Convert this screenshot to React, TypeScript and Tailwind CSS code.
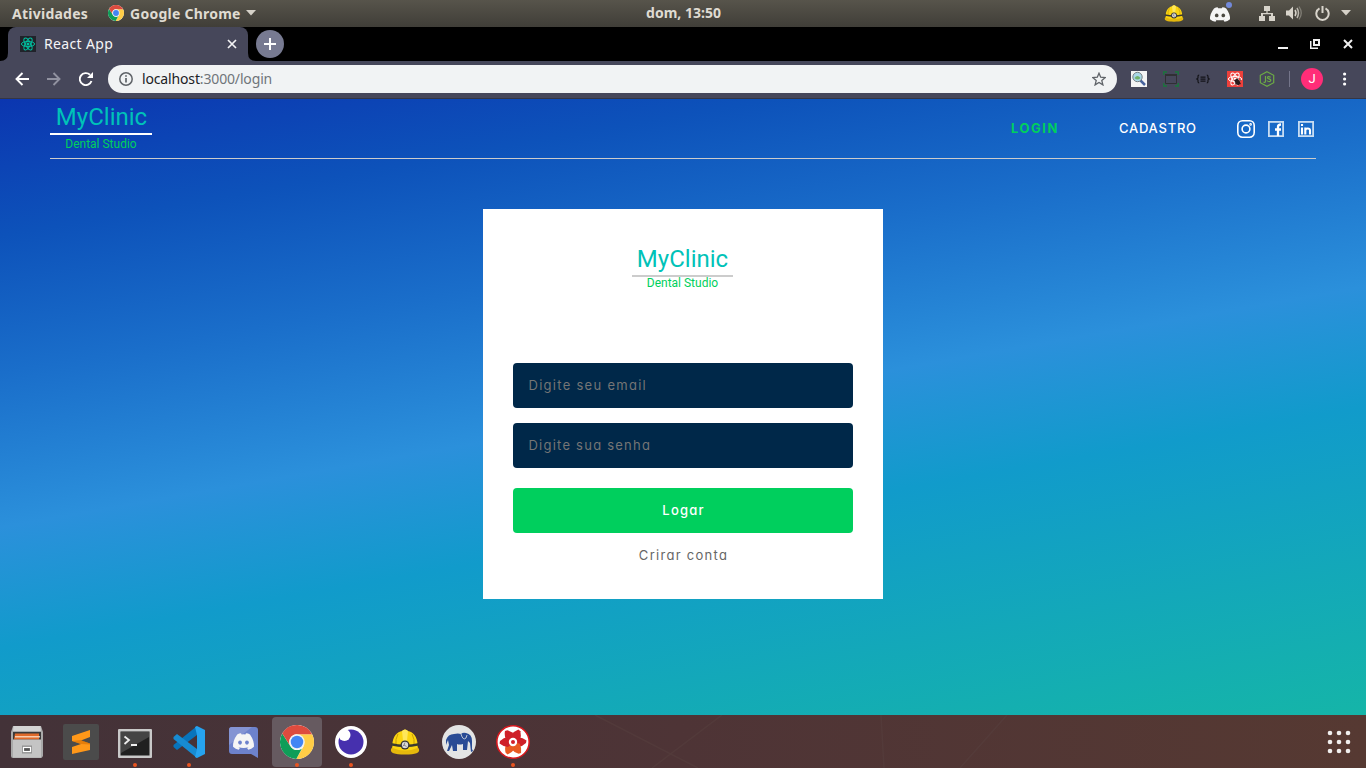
import type { ReactNode } from "react";

const ubuntu = "font-['Noto_Sans',sans-serif]";
const lexend = "font-[Inter,sans-serif] [font-feature-settings:'cv11']";

function ChromeIcon({ size }: { size: number }) {
  return (
    <svg width={size} height={size} viewBox="0 0 48 48">
      <circle cx="24" cy="24" r="24" fill="#fff" />
      <path d="M24 13 H45.3 A24 24 0 0 1 23 48 L33.5 29.5 Z" fill="#ffcd46" />
      <path d="M3.2 12 L14.5 29.5 C18 36 26 37 31 33 L23 48 A24 24 0 0 1 3.2 12 Z" fill="#0f9d58" />
      <path d="M24 13 H45.3 A24 24 0 0 0 3.2 12 L14.5 29.5 A11 11 0 0 1 24 13Z" fill="#dd4b3e" />
      <circle cx="24" cy="24" r="11" fill="#f1f1f1" />
      <circle cx="24" cy="24" r="8.8" fill="#4285f4" />
    </svg>
  );
}

function Helmet({ width, height }: { width: number; height: number }) {
  return (
    <svg width={width} height={height} viewBox="0 0 30 26">
      <path d="M1 20 C0 24 4 25.5 15 25.5 S30 24 29 20 L26 16 H4 Z" fill="#e5b80c" />
      <path d="M2.500 19 C1.500 8 7 3 12 2 Q15 -1 18 2 C23 3 28.500 8 27.500 19 Q15 24 2.500 19Z" fill="#fbd511" />
      <path d="M12 2 Q15 -1 18 2 L17 12 H13Z" fill="#ffe75a" />
      <path d="M8 5 Q5 10 6 17 M22 5 Q25 10 24 17" stroke="#c99e07" fill="none" />
      <path d="M1 14 Q15 17.500 29 14 V16.500 Q15 20 1 16.500Z" fill="#3b3a30" />
      <circle cx="15" cy="16" r="4.5" fill="#333" />
      <circle cx="15" cy="16" r="3.200" fill="#d8d8d8" />
      <path d="M15 13.500l-1 2.500 2.500 1.500M14 16l-1.500 1.500" stroke="#666" strokeWidth=".7" fill="none" />
    </svg>
  );
}

function DiscordFace({ width, height, eye }: { width: number; height: number; eye: string }) {
  return (
    <svg width={width} height={height} viewBox="0 0 22 16" preserveAspectRatio="none">
      <path
        d="M5 1.5 Q7 .4 8.6 .3 L9.2 1.4 Q11 1.1 12.8 1.4 L13.4 .3 Q15.4 .4 17.2 1.5 Q21.4 7.5 21 13 Q18.6 15.2 15.6 15.7 L14.4 14 L16 13.2 Q11 15.2 6 13.2 L7.6 14 L6.4 15.7 Q3.4 15.2 1 13 Q.6 7.5 5 1.5Z"
        fill="#f5f5f5"
      />
      <ellipse cx="7.7" cy="9" rx="1.8" ry="2" fill={eye} />
      <ellipse cx="14.3" cy="9" rx="1.8" ry="2" fill={eye} />
    </svg>
  );
}

function ReactAtom({ size, color, bg }: { size: number; color: string; bg: string }) {
  return (
    <svg width={size} height={size} viewBox="0 0 16 16">
      <rect width="16" height="16" fill={bg} />
      <g fill="none" stroke={color} strokeWidth="1">
        <ellipse cx="8" cy="8" rx="6.6" ry="2.6" />
        <ellipse cx="8" cy="8" rx="6.6" ry="2.6" transform="rotate(60 8 8)" />
        <ellipse cx="8" cy="8" rx="6.6" ry="2.6" transform="rotate(120 8 8)" />
      </g>
      <circle cx="8" cy="8" r="1.5" fill={color} />
    </svg>
  );
}

function TopBar() {
  return (
    <div className={`flex h-[27px] shrink-0 items-center bg-linear-to-b from-[#57544b] to-[#403e38] pb-px text-[14px] font-bold text-[#dfdbd2] ${ubuntu}`}>
      <div className="flex flex-1 items-center">
        <span className="ml-3 w-[96px] whitespace-nowrap tracking-[0.250px]">Atividades</span>
        <ChromeIcon size={16} />
        <span className="ml-[6px] w-[112px] whitespace-nowrap tracking-[0.250px]">Google Chrome</span>
        <svg className="ml-1" width="10" height="6" viewBox="0 0 10 6"><path d="M0 0h10L5 5.5z" fill="#d5d1c8" /></svg>
      </div>
      <span className="mb-px ml-px whitespace-nowrap text-[14px]">dom, 13:50</span>
      <div className="flex flex-1 items-center justify-end">
        <Helmet width={20} height={17} />
        <span className="relative ml-[25px] mr-[28px] mt-[2px] flex">
          <DiscordFace width={22} height={15} eye="#4b4941" />
          <span className="absolute -right-px -top-[5px] size-[6px] rounded-full bg-[#7289da]" />
        </span>
        <svg width="16" height="16" viewBox="0 0 16 16" fill="#d8d4cb">
          <path d="M5 1h6v5H8.600v2H14v3h2v5h-6v-5h2V9.300H4V11h2v5H0v-5h2V8h5.400V6H5z" />
        </svg>
        <svg className="ml-[11px]" width="16" height="14" viewBox="0 0 16 14" fill="none">
          <path d="M0 4.500h3l4-4v13l-4-4H0z" fill="#d8d4cb" />
          <path d="M9 4q2 3 0 6" stroke="#d8d4cb" strokeWidth="1.500" />
          <path d="M11 2q3 5 0 10" stroke="#bbb7ae" strokeWidth="1.500" />
          <path d="M13 .5q4.500 6.500 0 13" stroke="#827f76" strokeWidth="1.300" />
        </svg>
        <svg className="ml-[13px]" width="15" height="15" viewBox="0 0 15 15" fill="none" stroke="#d8d4cb" strokeWidth="2">
          <path d="M4.500 2.300a6.200 6.200 0 1 0 6 0M7.500 0v7" />
        </svg>
        <svg className="ml-[11px] mr-[15px]" width="10" height="6" viewBox="0 0 10 6"><path d="M0 0h10L5 5.500z" fill="#d5d1c8" /></svg>
      </div>
    </div>
  );
}

function TabStrip() {
  return (
    <div className="flex h-[34px] shrink-0 items-end bg-black">
      <svg width="8" height="8" viewBox="0 0 8 8"><path d="M8 0v8H0q8 0 8-8" fill="#46475a" /></svg>
      <div className="flex h-[34px] w-[240px] items-center rounded-t-[8px] bg-[#46475a] pl-3 pr-[11px]">
        <ReactAtom size={16} color="#00c0a0" bg="#20232a" />
        <span className={`ml-2 mb-px flex-1 whitespace-nowrap text-[14px] tracking-[0.350px] text-[#f5f5f7] ${ubuntu}`}>React App</span>
        <svg width="10" height="10" viewBox="0 0 10 10" stroke="#f2f2f4" strokeWidth="1.700"><path d="M1 1l8 8M9 1l-8 8" /></svg>
      </div>
      <svg width="8" height="8" viewBox="0 0 8 8"><path d="M0 0v8h8q-8 0-8-8" fill="#46475a" /></svg>
      <div className="mb-[3px] flex size-7 items-center justify-center rounded-full bg-[#777a91]">
        <svg width="12" height="12" viewBox="0 0 12 12" stroke="#fff" strokeWidth="2"><path d="M6 0v12M0 6h12" /></svg>
      </div>
      <div className="flex h-full flex-1 items-center justify-end pr-[13px]">
        <svg width="10" height="12" viewBox="0 0 10 12"><path d="M0 9h10v2H0z" fill="#f0f0f0" /></svg>
        <svg className="ml-[22px]" width="10" height="10" viewBox="0 0 10 10" fill="none" stroke="#f0f0f0">
          <path d="M4 1h5v5H4z" strokeWidth="2" />
          <path d="M.75 2v7.250H8" strokeWidth="1.500" />
        </svg>
        <svg className="ml-[23px]" width="10" height="10" viewBox="0 0 10 10" stroke="#f0f0f0" strokeWidth="2"><path d="M1 1l8 8M9 1l-8 8" /></svg>
      </div>
    </div>
  );
}

function Toolbar() {
  return (
    <div className="flex h-[38px] shrink-0 items-center border-b border-[#353644] bg-[#46475a] pb-px">
      <svg className="ml-[15px]" width="14" height="14" viewBox="0 0 14 14" fill="none" stroke="#fff" strokeWidth="1.900"><path d="M14 7H1.500M7.500 1L1.500 7l6 6" /></svg>
      <svg className="ml-[18px]" width="14" height="14" viewBox="0 0 14 14" fill="none" stroke="#9192a0" strokeWidth="1.900"><path d="M0 7h12.500M6.500 1l6 6-6 6" /></svg>
      <svg className="ml-[18px]" width="14" height="14" viewBox="0 0 14 14" fill="none"><path d="M12.500 9A6 6 0 1 1 11 2.800" stroke="#fff" strokeWidth="1.900" /><path d="M14 0v6H8z" fill="#fff" /></svg>
      <div className="ml-[15px] flex h-7 w-[1009px] items-center rounded-full bg-[#f1f3f4] pl-[11px] pr-[11px]">
        <svg width="14" height="14" viewBox="0 0 14 14" fill="none" stroke="#5f6368" strokeWidth="1.500"><circle cx="7" cy="7" r="6.200" /><path d="M7 6v4.500M7 3.300v1.500" strokeWidth="1.700" /></svg>
        <span className={`mb-[2px] ml-[9px] flex-1 whitespace-nowrap text-[14px] tracking-[-0.150px] text-[#202124] ${ubuntu}`}>localhost<span className="text-[#70757a]">:3000/login</span></span>
        <svg width="14" height="14" viewBox="0 0 14 14" fill="none" stroke="#5f6368" strokeWidth="1.300"><path d="M7 1.200l1.700 4 4.600.4-3.500 3 1.100 4.300L7 10.500l-3.900 2.400 1.100-4.300-3.500-3 4.600-.4z" /></svg>
      </div>
      <svg className="ml-[14px]" width="16" height="16" viewBox="0 0 16 16">
        <rect width="16" height="16" fill="#f4f4f4" />
        <path d="M9 9l5 5" stroke="#48639d" strokeWidth="2.500" />
        <circle cx="6.500" cy="6" r="4.700" fill="#a9d7e8" stroke="#777f82" />
        <path d="M3.500 7q3-4 6 0q-3 3-6 0" fill="#71b36b" />
      </svg>
      <svg className="ml-4" width="16" height="16" viewBox="0 0 16 16" fill="none">
        <path d="M.75 4V1H4M12 1h3.250v3M.75 12v3H4M12 15h3.250v-3" stroke="#19773b" strokeWidth="1.300" />
        <path d="M2.500 3.500h11v9h-11z" stroke="#303034" /><path d="M2 4h12" stroke="#303034" strokeWidth="2" />
      </svg>
      <svg className="ml-4" width="16" height="16" viewBox="0 0 16 16" fill="none" stroke="#15151a" strokeWidth="1.200">
        <path d="M4.200 4.200Q3 4.200 3 5.500V7L1.800 8 3 9v1.500q0 1.300 1.200 1.300M11.800 4.200q1.200 0 1.200 1.300V7l1.200 1-1.200 1v1.500q0 1.300-1.200 1.300M5.500 6.200h5M5.500 8.200h5M5.500 10.200h5" />
      </svg>
      <div className="relative ml-4 size-4">
        <ReactAtom size={16} color="#fff" bg="#ed403b" />
        <svg className="absolute left-[6px] top-[6px]" width="9" height="9" viewBox="0 0 9 9"><ellipse cx="4.500" cy="5" rx="2.300" ry="3.300" transform="rotate(-35 4.500 5)" fill="#2b1c1c" /><path d="M1 3l7 4M5 1L3 8M8 3L2 7" stroke="#2b1c1c" strokeWidth=".8" /></svg>
      </div>
      <svg className="ml-4" width="16" height="16" viewBox="0 0 16 16" fill="none" stroke="#6cab45" strokeWidth="1.200">
        <path d="M8 .7l6.700 3.600v7.400L8 15.300l-6.700-3.600V4.300zM6.500 5v5.300q0 1.400-2 .9M11.700 6.300Q8.500 4.800 8.500 6.700c0 1.600 3.300.7 3.300 2.600 0 1.800-3.500 1.400-3.700.2" />
      </svg>
      <div className="ml-[14px] h-4 w-px bg-[#74758a]" />
      <div className="ml-[11px] flex size-[22px] items-center justify-center rounded-full bg-[#ff2d78] text-[13px] text-white font-[Roboto,sans-serif]">J</div>
      <svg className="ml-5" width="4" height="14" viewBox="0 0 4 14" fill="#fff"><circle cx="1.600" cy="2" r="1.600" /><circle cx="1.600" cy="7" r="1.600" /><circle cx="1.600" cy="12" r="1.600" /></svg>
    </div>
  );
}

function Header() {
  return (
    <header className="mx-[50px] flex h-[60px] shrink-0 items-start border-b border-[#ccc]">
      <div className="flex w-[102px] flex-col items-center font-[Roboto,sans-serif]">
        <span className="flex h-[36px] w-full items-center justify-center border-b-2 border-white pl-px pt-[2px] text-[24px] text-[#00c2b8]">MyClinic</span>
        <span className="mt-[1px] text-[12px] leading-[17px] text-[#00cf5d]">Dental Studio</span>
      </div>
      <nav className={`ml-auto flex h-[59px] items-center text-[13px] ${lexend}`}>
        <span className="w-[108px] whitespace-nowrap font-bold tracking-[1.500px] text-[#00cf5d]">LOGIN</span>
        <span className="w-[118px] whitespace-nowrap font-medium tracking-[0.750px] text-white">CADASTRO</span>
        <svg width="18" height="18" viewBox="0 0 18 18" fill="none" stroke="#fff" strokeWidth="1.600"><rect x=".8" y=".8" width="16.400" height="16.400" rx="4.600" /><circle cx="9" cy="9" r="3.900" /><circle cx="13.600" cy="4.400" r=".5" /></svg>
        <svg className="ml-[13px]" width="16" height="16" viewBox="0 0 16 16" fill="none"><rect x=".9" y=".9" width="14.200" height="14.200" stroke="#c7dcf2" strokeWidth="1.800" /><path d="M10 15V6q0-2.500 3-2.500M7 8.500h6" stroke="#fff" strokeWidth="2.300" /></svg>
        <svg className="ml-[14px] mr-[2px]" width="16" height="16" viewBox="0 0 16 16" fill="none"><rect x=".9" y=".9" width="14.200" height="14.200" stroke="#c7dcf2" strokeWidth="1.800" /><path d="M4 6.500V13.500M4 3v2M7.300 6.500V13.500M7.300 9.500q0-2 2.400-2T12 9.500v4" stroke="#fff" strokeWidth="2.100" /></svg>
      </nav>
    </header>
  );
}

function LoginCard() {
  return (
    <main className={`mx-auto mt-[50px] flex h-[390px] w-[400px] flex-col items-center bg-white px-[30px] text-[13px] ${lexend}`}>
      <div className="mr-px mt-[35px] flex h-[119px] w-[101px] flex-col items-center font-[Roboto,sans-serif]">
        <span className="flex h-[33px] w-full items-center justify-center border-b-2 border-[#ccc] pb-[2px] text-[24px] text-[#00c2b8]">MyClinic</span>
        <span className="text-[12px] leading-[13px] text-[#00cf5d]">Dental Studio</span>
      </div>
      <input className="h-[45px] w-[340px] shrink-0 rounded-[4px] bg-[#002849] px-[15.500px] pb-[2px] tracking-[1.280px] placeholder:text-[#757575]" placeholder="Digite seu email" />
      <input className="mt-[15px] h-[45px] w-[340px] shrink-0 rounded-[4px] bg-[#002849] px-[15.500px] pb-[2px] tracking-[1.230px] placeholder:text-[#757575]" placeholder="Digite sua senha" />
      <button className="mt-5 h-[45px] w-[340px] shrink-0 rounded-[4px] bg-[#00cf5d] pl-px font-medium tracking-[1.200px] text-white">Logar</button>
      <span className="ml-px mt-3 leading-5 tracking-[1.280px] text-[#666]">Crirar conta</span>
    </main>
  );
}

function DockItem({ children, running, active }: { children: ReactNode; running?: boolean; active?: boolean }) {
  return (
    <div className="flex h-[53px] w-[54px] items-start justify-center pt-[2px]">
      <div className={`relative flex h-[50px] w-[50px] items-center justify-center rounded-[4px] ${active ? "bg-[#665a60]" : ""}`}>
        {children}
        {running && <span className="absolute bottom-0 left-[22.500px] size-[4.500px] rounded-full bg-[#e95420]" />}
      </div>
    </div>
  );
}

function Dock() {
  return (
    <div className="relative flex h-[53px] shrink-0 items-center bg-linear-to-r from-[#433238] via-[#4e3436] to-[#563932]">
      <svg className="absolute left-[580px] top-0" width="440" height="53" viewBox="0 0 440 53" fill="none" stroke="#57403f" strokeWidth="1.500" opacity=".5"><path d="M15 0l103 53M142 0L72 53M301 0l3 53M427 0l-47 53" /></svg>
      <DockItem>
        <svg className="mb-px" width="32" height="34" viewBox="0 0 32 34">
          <path d="M2 1h28l2 6v24q-1 2-2 2H2q-2 0-2-2V7z" fill="#a9a9a9" /><path d="M2.500 1h27l.5 5H2z" fill="#d4d4d4" />
          <path d="M2 7h28v8H2z" fill="#3a3a3a" /><path d="M4 8.500h24v6H3z" fill="#e06a2a" /><path d="M4 11.200h25v1.200H4z" fill="#ffe5d0" />
          <path d="M2 14.500h28v18H2z" fill="#c4c4c4" /><rect x="11" y="20.500" width="10" height="8" fill="#929292" /><rect x="12.500" y="22.500" width="7" height="4" fill="#555" stroke="#fff" strokeWidth="1.200" />
        </svg>
      </DockItem>
      <DockItem>
        <svg width="36" height="36" viewBox="0 0 36 36"><rect width="36" height="36" rx="2" fill="#4b4b4b" /><path d="M9 12l18-6v7l-9 3.500 9 3v6.500L9 30v-7l9-3-9-3z" fill="#ff9819" /><path d="M9 17l9-1 9 3.500v1l-9-.5z" fill="#d66d00" opacity=".6" /></svg>
      </DockItem>
      <DockItem running>
        <svg className="mt-[2px]" width="34" height="29" viewBox="0 0 34 29"><rect width="34" height="29" rx="1" fill="#c9c9c9" /><rect x="2.500" y="2.500" width="29" height="24" fill="#202020" /><path d="M3 3h28v5L3 24z" fill="#444" /><path d="M6.500 7.500l4.500 3.500-4.500 4M13 16h6" stroke="#eee" strokeWidth="1.800" fill="none" /></svg>
      </DockItem>
      <DockItem running>
        <svg width="32" height="32" viewBox="0 0 32 32"><path d="M24 0v9L4 24l-3.500-3v-2z" fill="#0874bc" /><path d="M.5 11L4 8l20 15v9L.5 13z" fill="#178bd2" /><path d="M24 0l8 4v24l-8 4-2-1 2-8V9l-2-8z" fill="#26a3ef" /></svg>
      </DockItem>
      <DockItem>
        <div className="relative flex h-[31px] w-[29px] justify-center">
          <svg width="29" height="31" viewBox="0 0 29 31"><path d="M3 0h23q3 0 3 3v28l-7-4H3q-3 0-3-3V3q0-3 3-3z" fill="#6d82cc" /><path d="M3 0h20L0 18V3q0-3 3-3" fill="#8494d3" /></svg>
          <span className="absolute left-[3px] top-[6px]"><DiscordFace width={23} height={17} eye="#6d82cc" /></span>
        </div>
      </DockItem>
      <DockItem running active><ChromeIcon size={34} /></DockItem>
      <DockItem running>
        <svg width="32" height="32" viewBox="0 0 32 32"><circle cx="16" cy="16" r="16" fill="#fff" /><circle cx="16" cy="16" r="12.500" fill="#4630ae" /><circle cx="9.500" cy="9" r="6" fill="#fff" /></svg>
      </DockItem>
      <DockItem><Helmet width={30} height={26} /></DockItem>
      <DockItem>
        <svg width="34" height="34" viewBox="0 0 34 34"><circle cx="17" cy="17" r="17" fill="#e3e4e4" /><path d="M4 15q2-6 8-6 4-1 7 0 2-2 5-1 6 1 6 8v8l1 2-2 1-1-9-2-2-1 9h-4v-6q-4 1-6 0v7h-4l-1-6-3 6H5l2-6-1-5-2 5z" fill="#294b95" /><path d="M19 9q2 7 5 4l1-3" fill="none" stroke="#e3e4e4" strokeWidth=".8" /></svg>
      </DockItem>
      <DockItem running>
        <svg width="34" height="34" viewBox="0 0 34 34"><circle cx="17" cy="17" r="16.200" fill="#fff" stroke="#d7191e" strokeWidth="1.600" />
          {[30, 90, 150, 210, 270, 330].map((a) => (
            <path key={a} d="M17 18L12 12Q12.500 7 15.500 3.500L18 4Q21.500 7.500 22 12Z" fill={a > 100 && a < 260 ? "#e85a22" : "#cf2028"} transform={`rotate(${a} 17 17)`} />
          ))}
          <circle cx="17" cy="17" r="4.200" fill="#fff" /><circle cx="17" cy="17" r="2" fill="#d3202a" /></svg>
      </DockItem>
      <svg className="ml-auto mr-[15px]" width="24" height="24" viewBox="0 0 24 24" fill="#f1efee">
        {[3, 12, 21].map((y) => [3, 12, 21].map((x) => <circle key={`${x}-${y}`} cx={x} cy={y} r="2.300" />))}
      </svg>
    </div>
  );
}

export default function App() {
  return (
    <div className="flex h-[768px] w-[1366px] flex-col overflow-hidden">
      <TopBar />
      <TabStrip />
      <Toolbar />
      <div className="flex min-h-0 flex-1 flex-col bg-[linear-gradient(170deg,#0b36b0_0%,#0d52ba_16%,#1a6eca_32%,#2b90db_50%,#119bcb_64%,#15b5a8_100%)]">
        <Header />
        <LoginCard />
      </div>
      <Dock />
    </div>
  );
}
